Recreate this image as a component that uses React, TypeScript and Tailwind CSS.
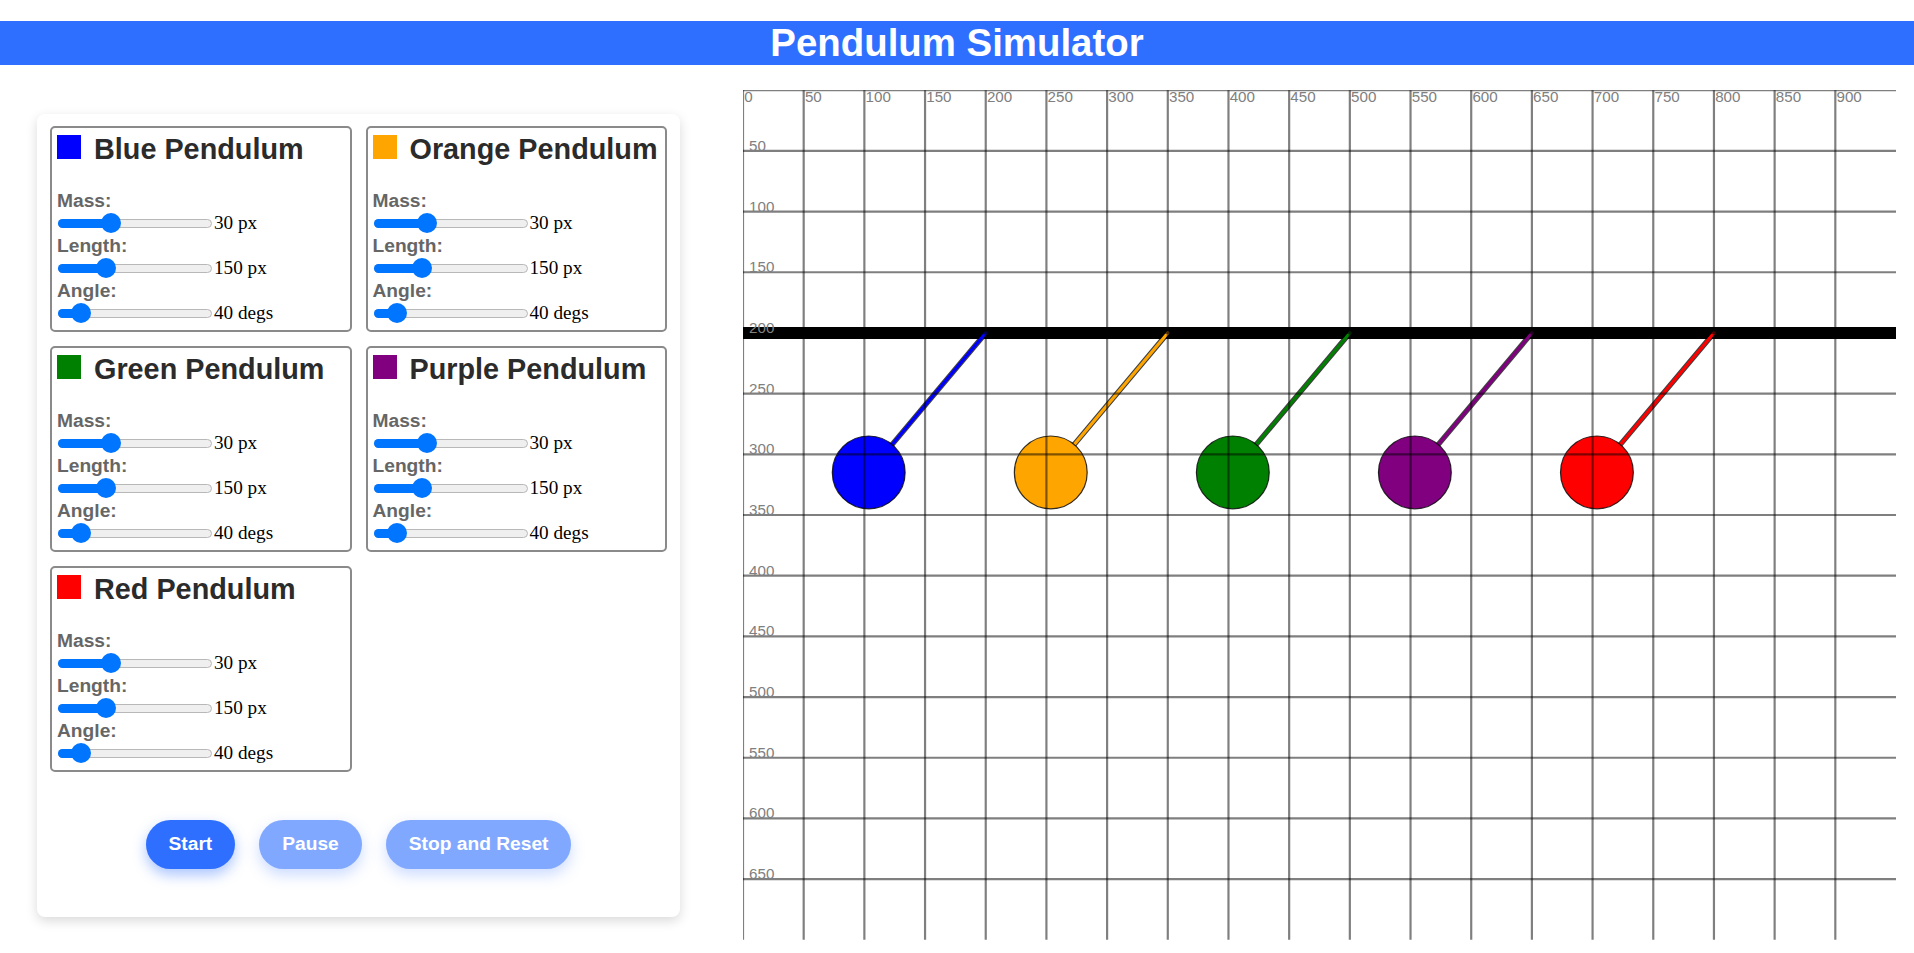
type Control = { label: string; value: string; pos: number };
type Pendulum = { name: string; color: string };

const PENDULUMS: Pendulum[] = [
  { name: "Blue Pendulum", color: "#0000ff" },
  { name: "Orange Pendulum", color: "#ffa500" },
  { name: "Green Pendulum", color: "#008000" },
  { name: "Purple Pendulum", color: "#800080" },
  { name: "Red Pendulum", color: "#ff0000" },
];

// thumb position as fraction of the slider travel
const CONTROLS: Control[] = [
  { label: "Mass:", value: "30 px", pos: 0.323 },
  { label: "Length:", value: "150 px", pos: 0.286 },
  { label: "Angle:", value: "40 degs", pos: 0.1 },
];

const TRACK_W = 154;
const THUMB = 20;

function Slider({ pos }: { pos: number }) {
  const center = THUMB / 2 + (TRACK_W - THUMB) * pos;
  return (
    <div className="relative ml-[1px] h-[9px] w-[154px] shrink-0 rounded-full border border-[#b8b8b8] bg-[#efefef]">
      <div
        className="absolute left-[-1px] top-[-1px] h-[9px] rounded-full bg-[#0075ff]"
        style={{ width: center }}
      />
      <div
        className="absolute top-1/2 h-[20px] w-[20px] -translate-y-1/2 rounded-full bg-[#0075ff]"
        style={{ left: center - THUMB / 2 - 1 }}
      />
    </div>
  );
}

function PendulumCard({ p }: { p: Pendulum }) {
  return (
    <div className="rounded-[5px] border-2 border-[#8a8a8a] p-[5px]">
      <div className="mb-[24px] flex items-start">
        <div className="mt-[2px] h-[24px] w-[24px] shrink-0" style={{ background: p.color }} />
        <h2 className="ml-[13px] whitespace-nowrap text-[28.8px] font-bold leading-[33px] text-[#2b2b2b]">
          {p.name}
        </h2>
      </div>
      {CONTROLS.map((c) => (
        <div key={c.label}>
          <div className="h-[22px] text-[19.2px] font-bold leading-[22px] text-[#666]">{c.label}</div>
          <div className="flex h-[23px] items-center">
            <Slider pos={c.pos} />
            <span className="ml-[2px] font-['Liberation_Serif',serif] text-[19.2px] leading-[22px] text-black">
              {c.value}
            </span>
          </div>
        </div>
      ))}
    </div>
  );
}

const PIVOTS = [200, 350, 500, 650, 800];
const ANGLE = (40 * Math.PI) / 180;
const LEN = 150;

function Canvas() {
  const xs = Array.from({ length: 19 }, (_, i) => i * 50);
  const ys = Array.from({ length: 14 }, (_, i) => i * 50);
  return (
    <svg width={1153} height={850} viewBox="0 0 950 700" className="block shrink-0">
      <line x1={0} y1={200} x2={950} y2={200} stroke="#000" strokeWidth={10} />
      {PIVOTS.map((px, i) => {
        const bx = px - LEN * Math.sin(ANGLE);
        const by = 200 + LEN * Math.cos(ANGLE);
        const color = PENDULUMS[i].color;
        return (
          <g key={px}>
            <line x1={px} y1={200} x2={bx} y2={by} stroke="#000" strokeOpacity={0.75} strokeWidth={4.4} strokeLinecap="round" />
            <line x1={px} y1={200} x2={bx} y2={by} stroke={color} strokeWidth={2.6} strokeLinecap="round" />
            <circle cx={bx} cy={by} r={30} fill={color} stroke="#000" strokeOpacity={0.8} strokeWidth={1} />
          </g>
        );
      })}
      {xs.map((x) => (
        <line key={`v${x}`} x1={x} y1={0} x2={x} y2={700} stroke="#000" strokeOpacity={0.5} strokeWidth={1.8} />
      ))}
      {ys.map((y) => (
        <line key={`h${y}`} x1={0} y1={y} x2={950} y2={y} stroke="#000" strokeOpacity={0.5} strokeWidth={1.8} />
      ))}
      <g fill="#808080" fontSize={12.5} fontFamily="'Liberation Sans', Arial, sans-serif">
        {xs.map((x) => (
          <text key={`tx${x}`} x={x + 1} y={10}>
            {x}
          </text>
        ))}
        {ys.slice(1).map((y) => (
          <text key={`ty${y}`} x={5} y={y}>
            {y}
          </text>
        ))}
      </g>
    </svg>
  );
}

export default function App() {
  return (
    <div className="min-h-screen bg-white pb-[13px] font-['Liberation_Sans',Arial,sans-serif]">
      <h1 className="mt-[21px] h-[44px] bg-[#2e6fff] text-center text-[38.4px] font-bold leading-[44px] text-white">
        Pendulum Simulator
      </h1>
      <div className="mt-[25px] flex items-center">
        <div className="ml-[37px] w-[643px] shrink-0 rounded-[8px] bg-white px-[13px] pt-[12px] pb-[48px] shadow-[0_4px_12px_rgba(0,0,0,0.15)]">
          <div className="grid grid-cols-2 gap-[14px]">
            {PENDULUMS.map((p) => (
              <PendulumCard key={p.name} p={p} />
            ))}
          </div>
          <div className="mt-[48px] flex justify-center gap-[24px]">
            <button className="h-[49px] rounded-full bg-[#2e6fff] px-[23px] text-[19.2px] font-bold text-white shadow-[0_6px_14px_rgba(46,111,255,0.4)]">
              Start
            </button>
            <button disabled className="h-[49px] rounded-full bg-[#2e6fff] px-[23px] text-[19.2px] font-bold text-white opacity-60 shadow-[0_6px_14px_rgba(46,111,255,0.4)]">
              Pause
            </button>
            <button disabled className="h-[49px] rounded-full bg-[#2e6fff] px-[23px] text-[19.2px] font-bold text-white opacity-60 shadow-[0_6px_14px_rgba(46,111,255,0.4)]">
              Stop and Reset
            </button>
          </div>
        </div>
        <div className="ml-[63px]">
          <Canvas />
        </div>
      </div>
    </div>
  );
}
